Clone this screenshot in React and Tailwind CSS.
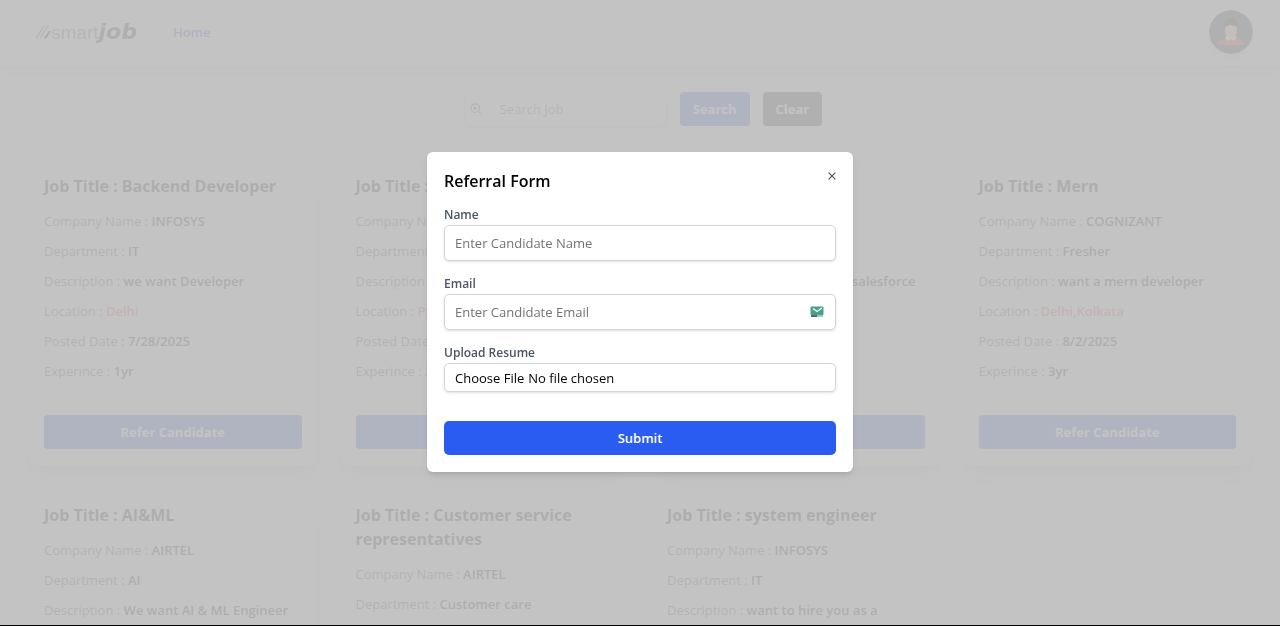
import React from "react";

const jobs = [
  { title: "Backend Developer", company: "INFOSYS", department: "IT", description: "we want Developer", location: "Delhi", posted: "7/28/2025", experience: "1yr" },
  { title: "Frontend", company: "AIRTEL", department: "IT", description: "we want Developer", location: "Pune", posted: "7/28/2025", experience: "3yr" },
  { title: "Salesforce", company: "TCS", department: "IT", description: "want fresher for salesforce", location: "Delhi", posted: "8/1/2025", experience: "1yr" },
  { title: "Mern", company: "COGNIZANT", department: "Fresher", description: "want a mern developer", location: "Delhi,Kolkata", posted: "8/2/2025", experience: "3yr" },
  { title: "AI&ML", company: "AIRTEL", department: "AI", description: "We want AI & ML Engineer", location: "Delhi", posted: "8/2/2025", experience: "2yr" },
  { title: "Customer service representatives", company: "AIRTEL", department: "Customer care", description: "Customer support", location: "Pune", posted: "8/2/2025", experience: "1yr" },
  { title: "system engineer", company: "INFOSYS", department: "IT", description: "want to hire you as a system engineer", location: "Delhi", posted: "8/2/2025", experience: "1yr" },
];

function Logo() {
  return (
    <a href="#" aria-label="smartjob" className="flex items-baseline text-gray-500">
      <svg width="16" height="14" viewBox="0 0 16 14" fill="none" strokeWidth="1.3" aria-hidden="true">
        <path d="M1 13.500 9 1" stroke="#666" />
        <path d="M5 13.500 13.500 0" stroke="#b46a50" />
        <path d="M10 13.500 15 6" stroke="#111" strokeWidth="2" />
      </svg>
      <span className="font-['Liberation_Sans',sans-serif] text-[19px] leading-8">smart</span>
      <span className="font-['DejaVu_Sans',sans-serif] text-[22px] leading-8 font-bold text-[#2c4040] italic">job</span>
    </a>
  );
}

function Avatar() {
  return (
    <svg viewBox="0 0 44 44" className="size-11 rounded-full shadow-lg" aria-hidden="true">
      <circle cx="22" cy="22" r="22" fill="#2a3f58" />
      <path d="M8 35c1-5 7-6 11-8h6c4 2 10 3 11 8Z" fill="#f1402c" />
      <path d="M16 27l3-3h6l3 3-3 4-3-2-3 2Z" fill="#fff" />
      <path d="M16 15h12v6c0 4-3 6-6 6s-6-2-6-6Z" fill="#ffc0b0" />
      <path d="M15.500 18c-2-7 2-10 6.500-10 5 0 8 3 6.500 10l-2-2c-3 0-5-1-6-2-1 2-3 2-5 4Z" fill="#1b1b1b" />
    </svg>
  );
}

function SearchIcon() {
  return (
    <svg width="12" height="12" viewBox="0 0 14 14" fill="none" stroke="currentColor" strokeWidth="1.3" strokeLinecap="round" className="shrink-0" aria-hidden="true">
      <circle cx="6" cy="6" r="5" />
      <path d="m10 10 3 3" />
      <path d="M4.500 3v5.500l1.500-1.300h2.500Z" fill="currentColor" stroke="none" />
    </svg>
  );
}

function Row({ label, value, valueClass = "text-neutral-800" }) {
  return (
    <p className="text-neutral-600">
      {label} : <span className={`font-semibold ${valueClass}`}>{value}</span>
    </p>
  );
}

function JobCard({ job }) {
  return (
    <article className="flex flex-col rounded-xl border border-gray-100 bg-white p-4 shadow-xl">
      <h2 className="mb-[13px] text-base leading-6 font-bold text-neutral-800">Job Title : {job.title}</h2>
      <div className="mb-[34px] flex flex-col gap-[10px]">
        <Row label="Company Name" value={job.company} />
        <Row label="Department" value={job.department} />
        <Row label="Description" value={job.description} />
        <Row label="Location" value={job.location} valueClass="text-[#d85a60]" />
        <Row label="Posted Date" value={job.posted} />
        <Row label="Experince" value={job.experience} />
      </div>
      <button type="button" className="mt-auto rounded-sm bg-[#4060e0] py-[7px] font-bold text-white">
        Refer Candidate
      </button>
    </article>
  );
}

function MailBadge() {
  return (
    <svg width="14" height="12" viewBox="0 0 14 12" aria-hidden="true">
      <rect x="0.500" y="0.500" width="13" height="8.500" rx="1" fill="#4ba08d" />
      <path d="M3 2.500 7 5.500 12 2" fill="none" stroke="#fff" strokeWidth="1.200" />
      <path d="M1 10h6" stroke="#333" strokeWidth="1.500" />
      <path d="M7 10h6" stroke="#63c7a5" strokeWidth="1.500" />
    </svg>
  );
}

const labelClass = "mb-[2px] block text-xs leading-4 font-semibold text-gray-600";
const fieldClass = "block w-full rounded-[5px] border border-gray-300 px-[10px] shadow-sm placeholder:text-neutral-500";

function ReferralDialog() {
  return (
    <div className="fixed inset-0 flex items-center justify-center border-b border-black bg-[#bcbcbc]/90 p-4 pb-[18px]">
      <div role="dialog" aria-modal="true" aria-labelledby="referral-title" className="w-full max-w-[426px] rounded-md bg-white p-[17px] shadow-md">
        <div className="mb-[14px] flex items-start justify-between">
          <h2 id="referral-title" className="text-base leading-6 font-semibold text-black">Referral Form</h2>
          <button type="button" aria-label="Close" className="py-[3px] text-gray-600">
            <svg width="8" height="8" viewBox="0 0 8 8" stroke="currentColor" strokeWidth="1.2" aria-hidden="true">
              <path d="m.7.7 6.600 6.600M7.300.7.7 7.300" />
            </svg>
          </button>
        </div>
        <form onSubmit={(e) => e.preventDefault()}>
          <div className="mb-[15px]">
            <label htmlFor="name" className={labelClass}>Name</label>
            <input id="name" type="text" placeholder="Enter Candidate Name" className={`${fieldClass} py-[7px]`} />
          </div>
          <div className="mb-[15px]">
            <label htmlFor="email" className={labelClass}>Email</label>
            <div className="relative">
              <input id="email" type="email" placeholder="Enter Candidate Email" className={`${fieldClass} py-[7px]`} />
              <span className="absolute inset-y-0 right-3 flex items-center"><MailBadge /></span>
            </div>
          </div>
          <div className="mb-[29px]">
            <label htmlFor="resume" className={labelClass}>Upload Resume</label>
            <input id="resume" type="file" className={`${fieldClass} pt-1 pb-[3px] text-black`} />
          </div>
          <button type="submit" className="w-full rounded-[5px] bg-[#2b5cf2] py-[7px] font-semibold text-white">Submit</button>
        </form>
      </div>
    </div>
  );
}

export default function App() {
  return (
    <div className="h-screen overflow-hidden bg-white font-['Open_Sans',sans-serif] text-[13px] leading-5">
      <header className="flex items-center justify-between px-[27px] pt-[10px] pb-3 shadow-lg">
        <div className="flex items-center gap-9 pl-2">
          <Logo />
          <nav><a href="#" className="font-semibold text-indigo-600">Home</a></nav>
        </div>
        <button type="button" aria-label="Account" className="rounded-full"><Avatar /></button>
      </header>
      <main className="px-[27px] pt-[26px]">
        <form className="mb-[31px] flex justify-center gap-[13px] pl-[6px]" onSubmit={(e) => e.preventDefault()}>
          <label className="flex w-[203px] items-center gap-[18px] rounded-sm border border-gray-200 px-[5px] text-gray-600 shadow-md">
            <SearchIcon />
            <input type="search" aria-label="Search Job" placeholder="Search Job" className="w-full min-w-0 font-medium placeholder:text-neutral-500" />
          </label>
          <button type="submit" className="rounded-sm bg-[#4060e0] px-[13px] py-[7px] font-bold text-white">Search</button>
          <button type="button" className="rounded-sm bg-neutral-700 px-[13px] py-[7px] font-bold text-white">Clear</button>
        </form>
        <div className="grid grid-cols-4 gap-5">
          {jobs.map((job) => <JobCard key={job.title} job={job} />)}
        </div>
      </main>
      <ReferralDialog />
    </div>
  );
}
